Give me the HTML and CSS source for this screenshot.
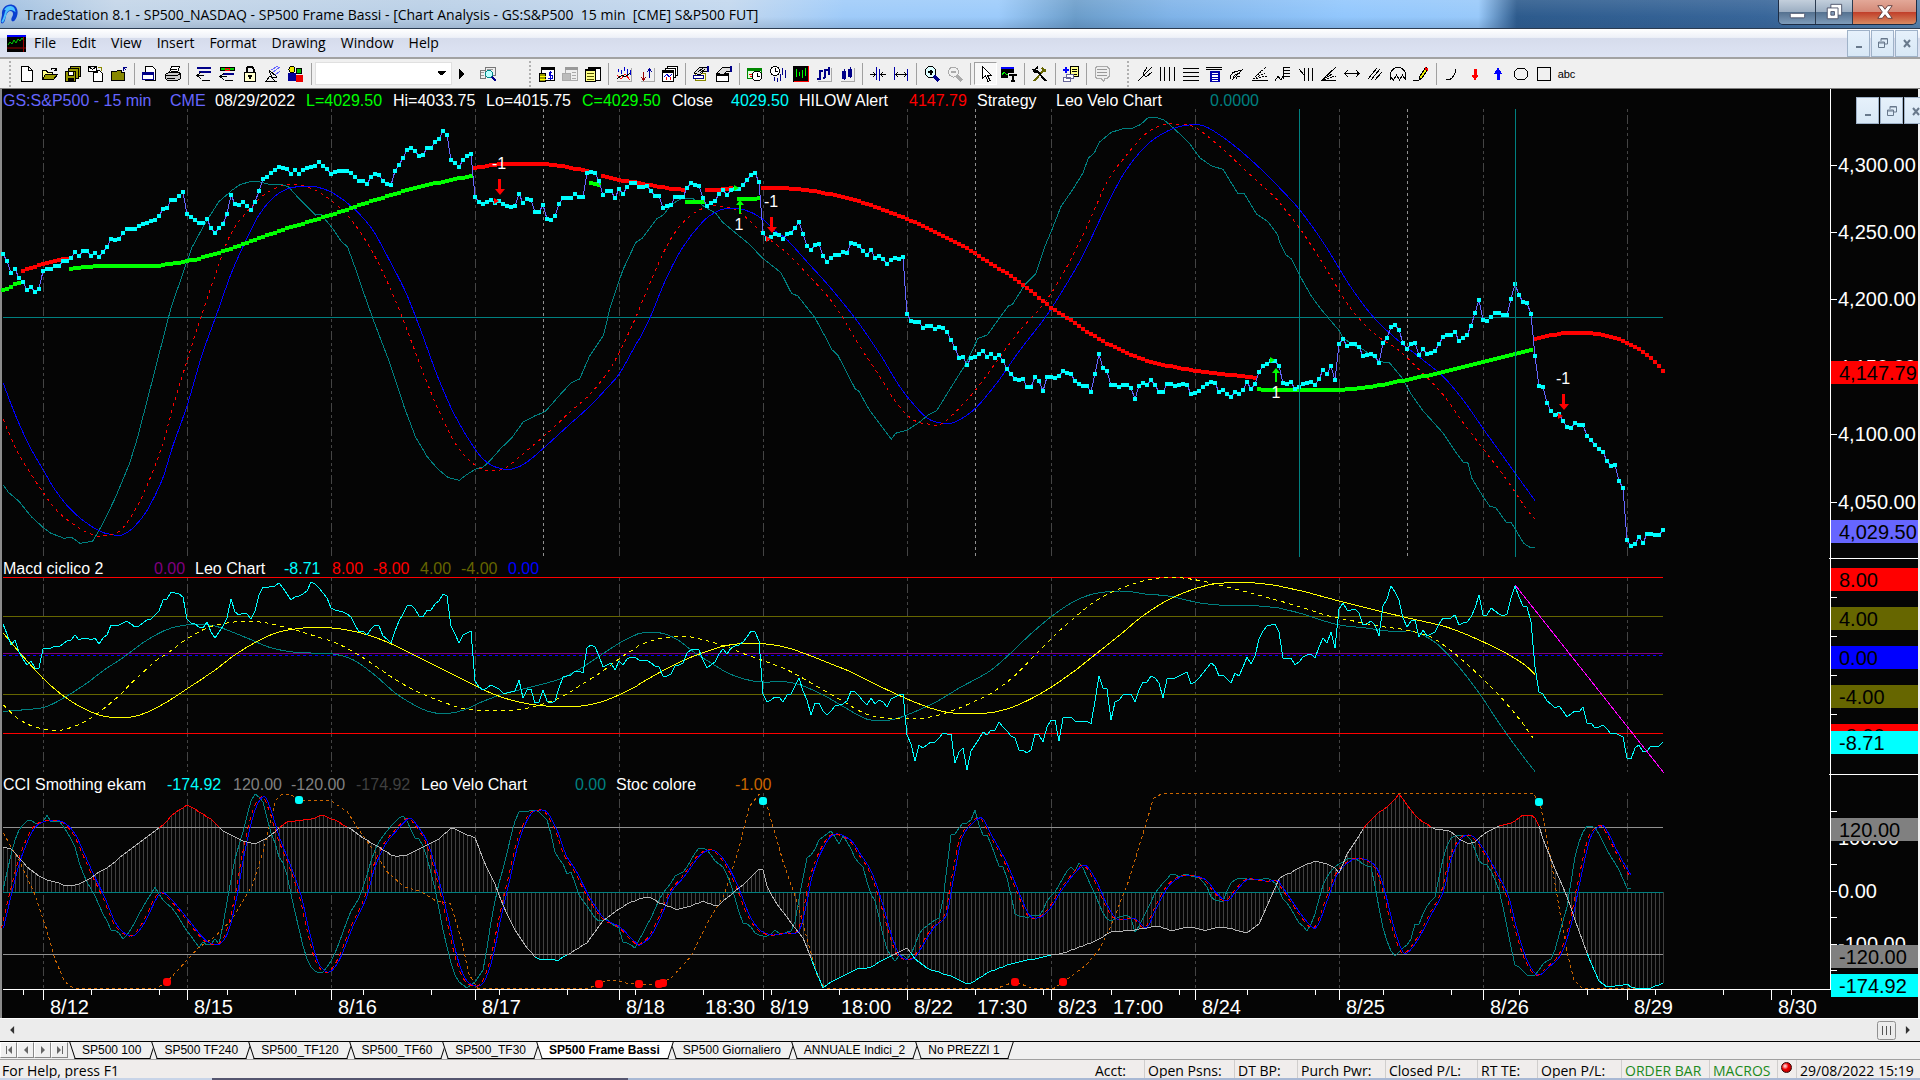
FILE: index.html
```html
<!DOCTYPE html>
<html lang="en">
<head>
<meta charset="utf-8">
<title>TradeStation 8.1</title>
<link rel="stylesheet" href="styles.css">
</head>
<body>
<header class="titlebar">
  <svg class="logo" viewBox="0 0 20 24"><path d="M2 13C1 4 10 0 15 4c4 4 3 10 0 14-2 3-5 1-3-3 2-3 1-6-2-6-4 1-4 6-5 9-1 4-5 5-4 0z" fill="#0b3fd0"/><path d="M5 8c3-4 8-4 9 0-3-2-6-1-8 2-1 4-2 8-4 10" fill="none" stroke="#4cc3ff" stroke-width="2"/></svg>
  <h1>TradeStation 8.1 - SP500_NASDAQ - SP500 Frame Bassi - [Chart Analysis - GS:S&amp;P500&nbsp; 15 min&nbsp; [CME] S&amp;P500 FUT]</h1>
  <div class="winbtns">
    <button aria-label="Minimize"><svg viewBox="0 0 20 20"><rect x="2.500" y="11.500" width="16" height="5" rx="1" fill="#fff" stroke="#4a4f66"/></svg></button>
    <button aria-label="Restore"><svg viewBox="0 0 20 20"><path d="M6.500 1.500h12v12h-12z" fill="#fff" stroke="#4a4f66"/><path d="M2.500 5.500h12v12h-12z" fill="#fff" stroke="#4a4f66"/><path d="M6.500 9.500h4v4h-4z" fill="#7f9ab8" stroke="#4a4f66"/></svg></button>
    <button class="close" aria-label="Close"><svg viewBox="0 0 20 20"><path d="M2 3h5l3 4 3-4h5l-5 7 5 7h-5l-3-4-3 4H2l5-7z" fill="#fff" stroke="#5b3a3a"/></svg></button>
  </div>
</header>
<nav class="menubar">
  <svg class="doc" viewBox="0 0 19 17"><path d="M0 0h19v17H0z" fill="#000"/><path d="M0 0h19v2H0z" fill="#00f"/><path d="M1 10l2-3 2 2 2-4 2 3 2-4 2 2 2-3 2 3" fill="none" stroke="#0c0"/><path d="M0 13h19M16.500 2v15" stroke="#900"/></svg>
  <a href="#">File</a><a href="#">Edit</a><a href="#">View</a><a href="#">Insert</a><a href="#">Format</a><a href="#">Drawing</a><a href="#">Window</a><a href="#">Help</a>
  <div class="mdi">
    <button aria-label="Minimize child"><svg viewBox="0 0 14 14"><path d="M4 10h6v2H4z" fill="#68798c"/></svg></button>
    <button aria-label="Restore child"><svg viewBox="0 0 14 14"><path d="M5 5V2.500h6.500V8H9M5 3h6M2.500 6h6v5.500h-6zM2 7h7" fill="none" stroke="#68798c"/></svg></button>
    <button aria-label="Close child"><svg viewBox="0 0 14 14"><path d="M4 4l6 7M10 4l-6 7" stroke="#68798c" stroke-width="2"/></svg></button>
  </div>
</nav>
<div class="toolbar" role="toolbar">
  <i class="grip"></i>
  <button aria-label="New"><svg viewBox="0 0 16 16"><path d="M2.500.500h7l4 4v11h-11zM9.500.500v4h4" fill="#fff"/></svg></button>
  <button aria-label="Open"><svg viewBox="0 0 16 16"><path d="M.500 13.500v-9h4l1 2h5v2" fill="#ff8"/><path d="M.500 13.500l3-5h12l-4 5z" fill="#990"/><path d="M9 3.500q3-3 5 0M12 4.500h2.500V2"/></svg></button>
  <button aria-label="Save all"><svg viewBox="0 0 16 16"><path d="M5.500.500h10v10h-10z" fill="#990"/><path d="M3.500 2.500h10v10h-10z" fill="#990"/><path d="M.500 5.500h10v10H.500z" fill="#990"/><path d="M3 5.500h5v4H3z" fill="#fff"/><path d="M3 12h5v4H3z" fill="#000"/></svg></button>
  <button aria-label="Import"><svg viewBox="0 0 16 16"><path d="M.500.500h8v5h-8zM.500.500l4 3 4-3" fill="#fff"/><path d="M5.500 6.500h4V4.500h2l3 3v8h-9z" fill="#fff"/><path d="M10 1.500h3v3" stroke="#880"/></svg></button>
  <button aria-label="Close folder"><svg viewBox="0 0 16 16"><path d="M.500 14.500v-9h5l1-1h4v2h3v8z" fill="#880"/><path d="M12 1l3 3M12 5V1h4" stroke="#008"/></svg></button>
  <i class="sep"></i>
  <button aria-label="Preview"><svg viewBox="0 0 16 16"><path d="M3.500.500h7l3 3v11h-10z" fill="#fff"/><path d="M.500 6.500h11v7H.500z" fill="#fff" stroke="#008"/><path d="M0 7.500h12" stroke="#008" stroke-width="3"/></svg></button>
  <button aria-label="Print"><svg viewBox="0 0 16 16"><path d="M4.500 6.500l2-6h8l-2 6z" fill="#fff"/><path d="M.500 8.500l3-2h11l1 2v4l-3 2h-10l-2-2z" fill="#ccc"/><path d="M.500 9.500h12l3-2M2 12h8M6 3h6M6 5h6"/></svg></button>
  <i class="sep"></i>
  <button aria-label="Insert analysis"><svg viewBox="0 0 16 16"><path d="M1 1.500h14M3 5.500h12" stroke="#008" stroke-width="2"/><path d="M1 9.500h7M5 6L1 9.500 5 13M6 14.500h8"/></svg></button>
  <button aria-label="Insert strategy"><svg viewBox="0 0 16 16"><path d="M1 1.500h14v3H1z" fill="#0c0"/><path d="M6 2h4v2H6z" stroke="red"/><path d="M4 7.500h11" stroke="#008" stroke-width="2"/><path d="M1 10.500h7M5 7l-4 3.500 4 3.500M6 14.500h8"/></svg></button>
  <button aria-label="Lock"><svg viewBox="0 0 16 16"><path d="M4.500 7V3l2-2.500h3l2 2.500v4" stroke-width="2"/><path d="M2.500 6.500h11v9h-11z" fill="#ffc"/><path d="M6 9.500h4M8 9v4" stroke-width="2"/></svg></button>
  <button aria-label="Satellite"><svg viewBox="0 0 16 16"><path d="M4 4l8 7-5 1zM1 15l4-5 5 5M0 15.500h12"/><path d="M6 4l7-4M8 6l7-5M10 9l5-4" stroke="#66f"/></svg></button>
  <button aria-label="Community"><svg viewBox="0 0 16 16"><circle cx="4" cy="3.500" r="3" fill="#ee0"/><circle cx="11" cy="5" r="3" fill="#0b0"/><path d="M.500 7.500h7v7h-7z" fill="#009" stroke="#009"/><path d="M8.500 9.500h6v6h-6z" fill="#e00" stroke="#e00"/></svg></button>
  <i class="sep"></i>
  <select aria-label="Symbol" class="combo"><option></option></select>
  <button class="narrow" aria-label="Go"><svg viewBox="0 0 16 16"><path d="M6 3l5 5-5 5z" fill="#000" stroke="none"/></svg></button>
  <button class="wide" aria-label="Lookup"><svg viewBox="0 0 16 16"><path d="M0 4h5v8H0zM5 1h10v8H5z" fill="#eee" stroke="#777"/><path d="M1 6h3M1 9h3M7 3h6" stroke="#999"/><circle cx="9" cy="8" r="3.500" fill="#bff" stroke="#088"/><path d="M12 11l4 4" stroke="#008" stroke-width="2"/></svg></button>
  <i class="grip"></i>
  <button aria-label="Account"><svg viewBox="0 0 16 16"><path d="M2.500 1.500h13v13h-13z" fill="#fff"/><path d="M2 2.500h14" stroke-width="3"/><path d="M.500 7.500h6v8h-6z" fill="#990"/><path d="M.500 10h6M.500 13h6" stroke="#ff0"/><path d="M13 6h-3v3h3v3H9M11.500 5v9" stroke="#00c"/></svg></button>
  <button aria-label="Orders"><svg viewBox="0 0 16 16"><path d="M3.500 1.500h12v13h-12z" fill="#eee" stroke="#aaa"/><path d="M3 2.500h13" stroke="#999" stroke-width="3"/><path d="M.500 7h8v7h-8zM10 6h4M10 9h4M10 12h4" stroke="#aaa" fill="#bbb"/></svg></button>
  <button aria-label="Matrix"><svg viewBox="0 0 16 16"><path d="M3.500 1.500h12v13h-12z" fill="#fff"/><path d="M.500 3.500h10v12H.500z" fill="#ff8"/><path d="M0 4h11M3 1.500h13" stroke-width="2"/><path d="M2 7.500h7M2 10.500h7M2 13.500h7" stroke="#550"/></svg></button>
  <i class="sep"></i>
  <button aria-label="Indicators"><svg viewBox="0 0 16 16"><path d="M1 15.500h14V2" stroke="#aaa"/><path d="M2 6V3M5 8V4M8 5V1M11 8V3M14 9V4" stroke="#00c"/><path d="M1 9l4 4 4-5 5 6" stroke="red"/><path d="M1 13l5-4 3 2 5-4"/></svg></button>
  <button aria-label="Strategies"><svg viewBox="0 0 16 16"><path d="M2 15.500h13V2" stroke="#aaa"/><path d="M4.500 6v8M2 11l2.500 3L7 11" stroke="#900"/><path d="M10.500 12V3M8 6l2.500-3L13 6" stroke="#009"/></svg></button>
  <button aria-label="Copy charts"><svg viewBox="0 0 16 16"><path d="M5.500.500h10v9h-10z" fill="#fff"/><path d="M3.500 2.500h10v9h-10z" fill="#fff"/><path d="M.500 4.500h11v11H.500z" fill="#fff"/><path d="M1 5.500h10" stroke-width="2"/><path d="M2 11l3-3 2 3 3-3" stroke="#00c"/><path d="M4 14v-3M8 14v-3" stroke="red"/></svg></button>
  <i class="sep"></i>
  <button aria-label="Format symbol"><svg viewBox="0 0 16 16"><path d="M2.500 7.500h10v7h-10z" fill="#ffc" stroke="#880"/><path d="M.500 9.500h10v3H.500z" fill="#fff" stroke="#008"/><path d="M1 7l6-6h7v4l-4 1-3 3z" fill="#ddd"/><path d="M5 6l5-4M7 7l5-4"/><path d="M15 0v6" stroke="#008" stroke-width="2"/></svg></button>
  <button aria-label="Format window"><svg viewBox="0 0 16 16"><path d="M.500 7.500h12v8H.500z" fill="#fff"/><path d="M1 9h12" stroke-width="2"/><path d="M1 7l6-6h7v4l-4 1-3 3z" fill="#ddd"/><path d="M15 0v6" stroke="#008" stroke-width="2"/></svg></button>
  <i class="sep"></i>
  <button aria-label="Calendar"><svg viewBox="0 0 16 16"><path d="M.500 2.500h14v10H.500z" fill="#dfd" stroke="#080"/><path d="M1 3h14" stroke="#080" stroke-width="3"/><path d="M2 8h3M3 10l2 1" stroke="red"/><circle cx="10" cy="10" r="5" fill="#fff"/><path d="M10 7v3h3"/></svg></button>
  <button aria-label="Interval"><svg viewBox="0 0 16 16"><circle cx="5" cy="5" r="4.500" fill="#fff"/><path d="M5 2v3h3"/><path d="M4 11v4M7 12v4M10 8v7M12 2v7M15 4v8" stroke="#008"/></svg></button>
  <button aria-label="Chart colours"><svg viewBox="0 0 16 16"><path d="M0 0h16v16H0z" fill="#000" stroke="none"/><path d="M.500 15.500h15V0" stroke="red" stroke-width="2"/><path d="M3 3v8M6 6v4M9 4v8M12 2v8" stroke="#0f0"/></svg></button>
  <button aria-label="Bars"><svg viewBox="0 0 16 16"><path d="M2 15.500h13V2" stroke="#aaa"/><path d="M4 4v10M1 13h3M4 5h3M9 3v9M7 12h2M9 4h3M13 1v8" stroke="#008" stroke-width="2"/></svg></button>
  <button aria-label="Candles"><svg viewBox="0 0 16 16"><path d="M2 15.500h13V2" stroke="#aaa"/><path d="M5 3v11M11 1v11" stroke="#008"/><path d="M4 5.500h2v6H4zM10 3.500h2v6h-2z" fill="#fff" stroke="#008" stroke-width="2"/></svg></button>
  <i class="sep"></i>
  <button aria-label="Decrease spacing"><svg viewBox="0 0 16 16"><path d="M6.500 1v13M9.500 3v12" stroke="#00a"/><path d="M0 8.500h5M3 6l2 2.500L3 11M16 8.500h-5M13 6l-2 2.500 2 2.500"/></svg></button>
  <button aria-label="Increase spacing"><svg viewBox="0 0 16 16"><path d="M1.500 1v13M14.500 3v12" stroke="#00a"/><path d="M3 8.500h10M5 6L3 8.500 5 11M11 6l2 2.500-2 2.500"/></svg></button>
  <i class="sep"></i>
  <button aria-label="Zoom in"><svg viewBox="0 0 16 16"><circle cx="6.500" cy="6" r="5.500" fill="#dff"/><path d="M4 6h5M6.500 3.500v5" stroke-width="2"/><path d="M10 10l5 5" stroke="#008" stroke-width="3"/></svg></button>
  <button aria-label="Zoom out"><svg viewBox="0 0 16 16"><g stroke="#aaa"><circle cx="6.500" cy="6" r="5"/><path d="M4 6h5" stroke-width="2"/><path d="M10 10l5 5" stroke-width="3"/></g></svg></button>
  <i class="sep"></i>
  <button class="pressed" aria-label="Pointer"><svg viewBox="0 0 16 16"><path d="M4.500.500v12l3-3 2.500 6 2-1-2.500-5h4z" fill="#fff"/></svg></button>
  <button aria-label="Chart text"><svg viewBox="0 0 16 16"><path d="M0 1h13v11H0z" fill="#000" stroke="none"/><path d="M0 1.500h13" stroke="#00f" stroke-width="2"/><path d="M1 9l2-3 3 3 3-2" stroke="#0f0"/><path d="M7 7h9v9H7z" fill="#eee" stroke="none"/><path d="M8 9h8M12 9v7M10 15h4" stroke-width="2"/></svg></button>
  <i class="sep"></i>
  <button aria-label="Tools"><svg viewBox="0 0 16 16"><path d="M2 15L13 3M10 2l4 4" stroke="#660" stroke-width="2"/><path d="M14 15L4 4M1 5l5-4M1 3l3 4" stroke-width="2"/></svg></button>
  <i class="sep"></i>
  <button aria-label="Add order"><svg viewBox="0 0 16 16"><path d="M7.500.500h8v10h-8z" fill="#ff8"/><path d="M9 3h5M9 5.500h5M9 8h5"/><path d="M3.500 8.500h7v4h-7zM.500 11.500h7v4h-7z" fill="#fff" stroke="#669"/><path d="M0 3.500h6M3 .500v6" stroke="#00f" stroke-width="2"/></svg></button>
  <i class="sep"></i>
  <button aria-label="Comment"><svg viewBox="0 0 16 16"><path d="M3 .500h10l2 2v8l-2 2h-2l-1 3-3-3H3l-2-2v-8z" fill="#eee" stroke="#aaa"/><path d="M3 3.500h10M3 6.500h10M3 9.500h10" stroke="#999"/></svg></button>
  <span class="space"></span>
  <i class="grip"></i>
  <button aria-label="Pitchfork"><svg viewBox="0 0 16 16"><path d="M1 15L10 6M6 8l4-7M10 6l5-5M9 11l6-5M6 8l3 3"/></svg></button>
  <button aria-label="Vertical lines"><svg viewBox="0 0 16 16"><path d="M.500 1v14M4.500 1v14M9.500 1v14M14.500 1v14"/></svg></button>
  <button aria-label="Horizontal lines"><svg viewBox="0 0 16 16"><path d="M0 2.500h16M0 6.500h16M0 10.500h16M0 14.500h16"/></svg></button>
  <button aria-label="Calculator"><svg viewBox="0 0 16 16"><path d="M0 1.500h16M0 3.500h16"/><path d="M4.500 5.500h8v10h-8z" fill="#fff" stroke="#00a" stroke-width="2"/><path d="M4 8h8M6 11h6M6 13h6" stroke="#00a"/></svg></button>
  <button aria-label="Arcs"><svg viewBox="0 0 16 16"><path d="M1 13Q2 4 12 5M4 13q1-6 7-5M7 13q0-3 4-2M3 14L14 3"/></svg></button>
  <button aria-label="Fan"><svg viewBox="0 0 16 16"><path d="M0 14.500h16"/><path d="M1 13L14 1M1 13L15 6M1 13l14-3" stroke-dasharray="2 1"/></svg></button>
  <button aria-label="Retracement"><svg viewBox="0 0 16 16"><path d="M0 15l3-5 3 4 2-4M8.500 13V1M9 1.500h6M9 4.500h6M9 7.500h6M9 10.500h6"/></svg></button>
  <button aria-label="Time lines"><svg viewBox="0 0 16 16"><path d="M1 3l5 6v6M6.500 2v13M10.500 2v13M14.500 2v13"/></svg></button>
  <button aria-label="Speed lines"><svg viewBox="0 0 16 16"><path d="M1 14L15 1M0 14.500h15M1 14L11 8"/><path d="M3 14l12-4M8 9l6 2" stroke-dasharray="2 1"/></svg></button>
  <button aria-label="Extend"><svg viewBox="0 0 16 16"><path d="M1 7.500h14M4 4L1 7.500 4 11M12 4l3 3.500-3 3.500"/></svg></button>
  <button aria-label="Parallel lines"><svg viewBox="0 0 16 16"><path d="M1 13L10 2M4 14L13 3M8 14l7-8"/></svg></button>
  <button aria-label="Cycles"><svg viewBox="0 0 16 16"><path d="M.500 14V7Q3 1.500 8 1.500T15.500 7v7M.500 11l3 3 3-5 3 5 3-5 3 5"/></svg></button>
  <button aria-label="Pencil"><svg viewBox="0 0 16 16"><path d="M0 14.500h6M6 14l1-4L13 1l2 2-6 9z" fill="#ee0"/><path d="M12 2l3 2" stroke="red" stroke-width="2"/></svg></button>
  <i class="sep"></i>
  <button aria-label="Arc"><svg viewBox="0 0 16 16"><path d="M2 13.500h4Q11 10 12 3"/></svg></button>
  <button aria-label="Down arrow"><svg viewBox="0 0 16 16"><path d="M7 3h2v6h2l-3 5-3-5h2z" fill="red" stroke="red"/></svg></button>
  <button aria-label="Up arrow"><svg viewBox="0 0 16 16"><path d="M7 13h2V7h2L8 2 5 7h2z" fill="#00f" stroke="#00f"/></svg></button>
  <button aria-label="Ellipse"><svg viewBox="0 0 16 16"><ellipse cx="8" cy="8" rx="7" ry="6"/></svg></button>
  <button aria-label="Rectangle"><svg viewBox="0 0 16 16"><path d="M1.500 1.500h13v13h-13z"/></svg></button>
  <button class="abc">abc</button>
</div>
<main class="chartwin">
  <svg id="chart" class="chart" viewBox="0 89 1920 929" role="img" aria-label="Price chart"></svg>
  <div class="mdi floating">
    <button aria-label="Minimize chart"><svg viewBox="0 0 14 14"><path d="M4 10h6v2H4z" fill="#68798c"/></svg></button>
    <button aria-label="Restore chart"><svg viewBox="0 0 14 14"><path d="M5 5V2.500h6.500V8H9M5 3h6M2.500 6h6v5.500h-6zM2 7h7" fill="none" stroke="#68798c"/></svg></button>
    <button aria-label="Close chart"><svg viewBox="0 0 14 14"><path d="M4 4l6 7M10 4l-6 7" stroke="#68798c" stroke-width="2"/></svg></button>
  </div>
</main>
<div class="scroll">
  <button aria-label="Scroll left"><svg viewBox="0 0 8 10"><path d="M6 0v10L1 5z" fill="#333"/></svg></button>
  <span class="space"></span>
  <svg class="thumb" viewBox="0 0 19 19"><rect x=".500" y=".500" width="18" height="18" rx="2" fill="#ececec" stroke="#909090"/><path d="M5.500 5v9M9.500 5v9M13.500 5v9" stroke="#555"/></svg>
  <button aria-label="Scroll right"><svg viewBox="0 0 8 10"><path d="M2 0v10l5-5z" fill="#333"/></svg></button>
</div>
<div class="tabs">
  <div class="pager">
    <button aria-label="First"><svg viewBox="0 0 10 10"><path d="M8 1v8L4 5zM2 1h1v8H2z" fill="#666"/></svg></button>
    <button aria-label="Previous"><svg viewBox="0 0 10 10"><path d="M7 1v8L3 5z" fill="#666"/></svg></button>
    <button aria-label="Next"><svg viewBox="0 0 10 10"><path d="M3 1v8l4-4z" fill="#666"/></svg></button>
    <button aria-label="Last"><svg viewBox="0 0 10 10"><path d="M2 1v8l4-4zM7 1h1v8H7z" fill="#666"/></svg></button>
  </div>
  <a class="tab" href="#">SP500 100</a><a class="tab" href="#">SP500 TF240</a><a class="tab" href="#">SP500_TF120</a><a class="tab" href="#">SP500_TF60</a><a class="tab" href="#">SP500_TF30</a><a class="tab active" href="#">SP500 Frame Bassi</a><a class="tab" href="#">SP500 Giornaliero</a><a class="tab" href="#">ANNUALE Indici_2</a><a class="tab" href="#">No PREZZI 1</a>
</div>
<footer class="status">
  <span class="help">For Help, press F1</span>
  <span class="cell w52">Acct:</span><span class="cell w90">Open Psns:</span><span class="cell w63">DT BP:</span><span class="cell w88">Purch Pwr:</span><span class="cell w92">Closed P/L:</span><span class="cell w60">RT TE:</span><span class="cell w84">Open P/L:</span><span class="cell w88 green">ORDER BAR</span><span class="cell w68 green">MACROS</span><span class="cell w19"><i class="led"></i></span><span class="cell w124">29/08/2022 15:19</span>
</footer>
<div class="taskbar"></div>
<script src="chart.js"></script>
</body>
</html>
```
FILE: styles.css
```css
* { box-sizing: border-box; }
body {
  margin: 0;
  min-height: 100vh;
  display: flex;
  flex-direction: column;
  overflow-x: hidden;
  background: #f0f0f0;
  color: #000;
  font: 14px/18px "Open Sans", "Noto Sans", sans-serif;
}
button { border: 0; padding: 0; background: none; font: inherit; color: inherit; }
a { color: inherit; text-decoration: none; }
svg { display: block; flex: none; }
.space { flex: 1; }

.titlebar {
  display: flex;
  height: 29px;
  border-bottom: 1px solid #2b3b50;
  background:
    linear-gradient(rgba(255,255,255,.1), rgba(255,255,255,0) 60%, rgba(40,70,110,.18)),
    linear-gradient(90deg, #9fbfe0 0, #c3d5e8 6%, #b9cfe6 22%, #c2d7ee 38%, #9fcbf9 44%, #9ccbfb 52%, #6b9dca 56%, #7fb3e8 61%, #92c7fd 70%, #98c9fa 77%, #2d5b8d 79%, #38669a 92%, #5b86ae 100%);
}
.logo { width: 20px; height: 24px; margin: 2px 5px 0 0; }
.titlebar h1 { flex: 1; margin: 0; font-size: 14px; font-weight: 400; line-height: 29px; white-space: nowrap; }
.winbtns {
  display: flex;
  height: 25px;
  margin-right: 3px;
  border: 1px solid #1d2c44;
  border-top: 0;
  border-radius: 0 0 5px 5px;
  overflow: hidden;
}
.winbtns button {
  width: 37px;
  display: flex;
  align-items: center;
  justify-content: center;
  border-right: 1px solid #2b3b50;
  background: linear-gradient(#c3cfdc, #9dafc3 48%, #54708f 50%, #7f9cba);
}
.winbtns .close { width: 63px; border: 0; background: linear-gradient(#e3a898, #d48a78 48%, #c03d28 50%, #d98a60); }
.winbtns svg { width: 20px; height: 18px; }

.menubar {
  display: flex;
  align-items: center;
  height: 30px;
  border-bottom: 2px solid #a2a2a2;
  background: linear-gradient(#fff, #eef1f8 30%, #d6dcec 34%, #dde3f3 95%);
}
.doc { width: 19px; height: 17px; margin: 0 8px 0 7px; }
.menubar a { margin-right: 15px; line-height: 28px; }
.mdi { display: flex; gap: 1px; }
.menubar .mdi { margin-left: auto; margin-right: 2px; }
.mdi button {
  width: 23px;
  height: 27px;
  display: flex;
  align-items: center;
  justify-content: center;
  border: 1px solid #9fb2c8;
  background: linear-gradient(#e6f1fb, #d8e8f6);
}
.mdi svg { width: 14px; height: 14px; }

.toolbar {
  display: flex;
  align-items: center;
  height: 30px;
  padding-left: 7px;
  border-bottom: 1px solid #808080;
}
.toolbar button { flex: none; width: 23px; height: 23px; display: flex; align-items: center; justify-content: center; }
.toolbar svg { width: 16px; height: 16px; fill: none; stroke: #000; shape-rendering: crispEdges; }
.toolbar .narrow { width: 17px; }
.toolbar .wide { width: 38px; }
.toolbar .pressed { border: 1px solid #a0a0a0; border-right-color: #fff; border-bottom-color: #fff; background: #f8f8f8; }
.toolbar .abc { font: 11px/16px "Liberation Sans", Arial, sans-serif; }
.grip { flex: none; width: 2px; height: 26px; margin: 0 4px 0 2px; background: repeating-linear-gradient(#b0b0b0 0 2px, transparent 2px 4px); }
.toolbar .wide + .grip { margin-left: 22px; }
.toolbar .space { flex: none; width: 12px; }
.sep { flex: none; width: 8px; height: 22px; background: linear-gradient(#a0a0a0, #a0a0a0) 4px 0 / 1px 100% no-repeat; }
.combo {
  appearance: none;
  flex: none;
  width: 137px;
  height: 23px;
  border: 1px solid #e0e0e0;
  background-color: #fff;
  background-image: linear-gradient(45deg, transparent 50%, #000 50%), linear-gradient(-45deg, transparent 50%, #000 50%);
  background-image: linear-gradient(to top right, transparent 50%, #000 50%), linear-gradient(to top left, transparent 50%, #000 50%);
  background-repeat: no-repeat;
  background-size: 5px 5px;
  background-position: right 9px top 8px, right 4px top 8px;
}

.chartwin { position: relative; overflow: hidden; background: #050505; }
.chart { width: 100%; height: auto; font-family: "Liberation Sans", Arial, sans-serif; }
.chart .line { fill: none; stroke-width: 1; shape-rendering: crispEdges; }
.chart .small { font-size: 16px; }
.chart .big { font-size: 20px; }
.floating { position: absolute; top: 8px; right: -7px; }

.scroll {
  display: flex;
  align-items: center;
  height: 23px;
  padding: 0 9px;
  border-top: 1px solid #fff;
  background: #ececec;
}
.scroll button svg { width: 7px; height: 8px; }
.scroll .thumb { width: 19px; height: 19px; margin-right: 8px; }

.tabs {
  display: flex;
  height: 18px;
  border-top: 1px solid #000;
  font: 12px/16px "Liberation Sans", Arial, sans-serif;
}
.pager { display: flex; margin-right: 3px; }
.pager button { width: 17px; height: 16px; display: flex; align-items: center; justify-content: center; border: 1px solid; border-color: #fff #888 #888 #fff; }
.pager svg { width: 10px; height: 10px; }
.tab {
  position: relative;
  z-index: 0;
  padding: 0 11px;
  margin-right: 1px;
  white-space: nowrap;
}
.tab::before, .tab::after {
  content: "";
  position: absolute;
  z-index: -1;
  top: 0;
  height: 16px;
  width: 60%;
  border-bottom: 1px solid #000;
  background: #f0f0f0;
}
.tab::before { left: 1px; border-left: 1px solid #000; transform: skewX(18deg); }
.tab::after { right: 0; border-right: 1px solid #000; transform: skewX(-18deg); }
.tab.active { font-weight: 700; z-index: 1; }
.tab.active::before, .tab.active::after { background: #fff; }

.status {
  display: flex;
  height: 19px;
  padding-left: 2px;
  border-top: 1px solid #a0a0a0;
  background: #f0edec;
}
.help { flex: 1; white-space: nowrap; line-height: 22px; }
.cell { flex: none; padding-left: 3px; line-height: 22px; white-space: nowrap; }
.cell + .cell { border-left: 1px solid #d0cecd; }
.w19 { width: 19px; }
.w52 { width: 52px; }
.w60 { width: 60px; }
.w63 { width: 63px; }
.w68 { width: 68px; }
.w84 { width: 84px; }
.w88 { width: 88px; }
.w90 { width: 90px; }
.w92 { width: 92px; }
.w124 { width: 124px; }
.green { color: #1c8a1c; }
.led { display: block; width: 11px; height: 11px; margin-top: 2px; border: 1px solid #300; border-radius: 6px; background: radial-gradient(circle at 35% 35%, #fbb 10%, #e00 40%, #900); }
.taskbar { height: 2px; background: linear-gradient(90deg, #c8d4e8 0 212px, #55556f 212px 628px, #a8b8d4 628px); }
```
FILE: chart.js
```js
const svg = document.getElementById('chart');
const out = [];

/* Samples come in three blocks, each with its own origin and horizontal scale. */
const blocks = [[0, 2.3758], [640, 2.3758], [1280, 2.45]];
function series(top, ...parts) {
  const pts = [];
  parts.forEach((text, b) => {
    text.trim().split(/\s+/).filter(Boolean).forEach(pair => {
      const [x, y] = pair.split(',').map(Number);
      pts.push([blocks[b][0] + x / blocks[b][1], top + y / 3]);
    });
  });
  return pts.sort((a, b) => a[0] - b[0]);
}
const single = (top, b, text) => series(top, ...[0, 1, 2].map(i => i === b ? text : ''));
function at(pts, x) {
  if (x <= pts[0][0]) return pts[0][1];
  for (let i = 1; i < pts.length; i++) {
    if (x <= pts[i][0]) {
      const [x0, y0] = pts[i - 1], [x1, y1] = pts[i];
      return y0 + (y1 - y0) * (x - x0) / (x1 - x0 || 1);
    }
  }
  return pts[pts.length - 1][1];
}
function bars(pts) {
  const r = [], a = pts[0][0] - 2, z = pts[pts.length - 1][0] + 2;
  for (let x = 3; x <= 1664; x += 4) if (x >= a && x <= z) r.push([x, Math.round(at(pts, x))]);
  return r;
}
const path = pts => 'M' + pts.map(p => `${p[0].toFixed(1)} ${p[1].toFixed(1)}`).join('L');
function smooth(pts) {
  let d = `M${pts[0][0].toFixed(1)} ${pts[0][1].toFixed(1)}`;
  for (let i = 0; i < pts.length - 1; i++) {
    const a = pts[i - 1] || pts[i], b = pts[i], c = pts[i + 1], e = pts[i + 2] || c;
    d += `C${(b[0] + (c[0] - a[0]) / 6).toFixed(1)} ${(b[1] + (c[1] - a[1]) / 6).toFixed(1)} ${(c[0] - (e[0] - b[0]) / 6).toFixed(1)} ${(c[1] - (e[1] - b[1]) / 6).toFixed(1)} ${c[0].toFixed(1)} ${c[1].toFixed(1)}`;
  }
  return d;
}
const line = (d, color, dash = '') => out.push(`<path class="line" d="${d}" stroke="${color}"${dash && ` stroke-dasharray="${dash}"`}/>`);
const vline = (x, a, b, color, dash) => line(`M${x + .5} ${a}V${b}`, color, dash);
const hline = (y, color, dash, a = 3, b = 1663) => line(`M${a} ${y + .5}H${b}`, color, dash);
const rect = (x, y, w, h, color) => out.push(`<rect x="${x}" y="${y}" width="${w}" height="${h}" fill="${color}"/>`);
const text = (x, y, s, color = '#fff', size = 'small', anchor = 'start') => out.push(`<text class="${size}" x="${x}" y="${y}" fill="${color}" text-anchor="${anchor}">${s}</text>`);
const dots = (pts, color) => out.push(`<path fill="${color}" d="${bars(pts).map(p => `M${p[0] - 2} ${p[1] - 2}h4v4h-4z`).join('')}"/>`);

const cyan = '#00ffff', red = '#ff0000', green = '#00ff00', teal = '#008080', blue = '#0000ff', violet = '#6666ff', olive = '#666600', gray = '#808080';

/* Frame and grid */
rect(0, 89, 1920, 929, '#050505');
rect(0, 89, 2, 929, '#8c8c8c');
rect(1918, 89, 2, 929, '#f0f0f0');
for (let x = 43; x < 1700; x += 144) {
  [[109, 556], [578, 772], [793, 990]].forEach(([a, b]) => vline(x, a, b, '#444', '3 3 9 3 3 3'));
}
[543, 975, 1407].forEach(x => vline(x, 109, 556, '#909090', '3 3'));
hline(317, teal);

/* Price cycle curves */
const cycTeal = series(90,
  '8,1185 20,1207 45,1234 75,1281 104,1314 120,1329 152,1345 170,1342 190,1360 220,1354 243,1304 275,1220 308,1120 325,1051 350,930 382,772 407,650 432,560 455,475 488,398 520,335 552,300 570,284 597,274 610,274 640,283 670,284 685,290 710,325 750,375 762,372 790,415 810,452 826,472 850,555 865,612 890,700 925,815 960,950 987,1040 1015,1100 1040,1137 1065,1163 1092,1171 1105,1157 1130,1137 1148,1131 1165,1111 1190,1075 1215,1045 1243,996 1270,978 1295,965 1330,915 1357,878 1377,867 1400,800 1434,735 1450,650 1480,540 1510,458',
  '5,445 25,412 40,386 55,375 75,343 100,324 125,325 150,347 180,370 195,395 230,432 260,463 290,503 335,548 360,610 375,618 415,682 440,740 455,778 470,795 490,845 512,898 520,904 545,960 575,1010 597,1048 607,1030 635,1020 660,1000 685,975 705,962 740,890 775,820 803,745 825,735 855,682 875,648 885,643 915,583 940,552 960,475 980,415 1000,350 1030,295 1052,250 1065,205 1080,187 1092,156 1120,127 1150,115 1170,115 1190,103 1208,82 1225,82 1245,90 1270,117 1305,160 1330,203 1358,228 1385,238 1420,310 1435,310 1465,372 1492,395 1515,435',
  '0,460 15,495 28,507 50,560 75,615 100,657 145,722 155,745 180,765 205,780 245,815 268,818 300,865 320,910 350,962 400,1030 430,1085 450,1118 460,1118 470,1165 500,1225 515,1250 528,1252 555,1298 567,1298 580,1325 597,1360 615,1374 624,1372');
const cycBlue = series(90,
  '8,880 25,938 45,1000 70,1068 104,1143 130,1198 160,1247 195,1289 235,1322 265,1334 292,1334 320,1309 350,1260 385,1170 410,1070 445,945 480,795 515,672 550,548 580,463 615,375 650,322 680,298 715,289 750,290 790,308 840,355 885,419 930,522 965,610 1000,722 1040,860 1080,975 1130,1080 1160,1120 1190,1136 1220,1136 1250,1118 1291,1075 1350,1007 1400,950 1440,897 1472,850 1510,765',
  '0,743 25,680 60,572 100,475 150,394 185,363 215,355 250,360 290,386 320,422 350,450 400,520 440,575 480,635 520,700 570,792 620,895 665,964 690,990 720,1000 750,995 797,955 850,875 900,785 960,687 1000,610 1050,502 1100,370 1150,250 1200,170 1240,132 1275,112 1310,104 1340,108 1380,137 1430,186 1490,255',
  '0,295 50,362 110,465 170,585 230,683 290,752 340,800 400,860 450,932 500,1020 550,1105 600,1190 625,1232');
const cycRed = series(90,
  '8,988 30,1055 55,1115 104,1210 140,1268 190,1316 225,1336 245,1338 285,1322 320,1262 350,1185 385,1068 410,955 440,830 475,690 510,560 545,440 580,375 620,322 655,294 690,284 730,291 775,320 830,383 880,475 920,575 955,680 1000,830 1040,955 1085,1067 1130,1127 1165,1142 1200,1134 1240,1094 1300,1030 1355,965 1400,915 1445,845 1472,785 1500,712',
  '0,652 30,560 70,453 110,388 150,355 185,348 225,358 250,380 300,440 350,490 400,556 450,625 485,690 520,765 570,860 610,940 650,990 690,1003 715,1002 750,965 797,900 850,810 900,725 960,640 1010,540 1060,415 1110,275 1150,205 1200,133 1240,106 1270,102 1310,107 1350,140 1400,195 1450,255 1505,318',
  '0,340 50,418 110,530 170,650 230,730 290,780 350,850 400,915 450,1000 500,1080 550,1160 600,1250 625,1288');
line(path(cycTeal), teal);
line(smooth(cycBlue), blue);
line(smooth(cycRed), red, '3 4');

/* Trend dots */
[[0, '8,600 17,597 27,589 36,583 46,577'],
 [0, '169,537 198,531 245,528 378,527 426,518 464,509 521,488 578,463 626,440 692,411 740,393 797,371 844,350 892,330 958,304 1015,286 1072,269 1120,258'],
 [0, '1405,279 1424,286'], [1, '112,336 150,336'], [1, '236,328 255,328 283,325'], [1, '1471,898 1500,900 1567,900'],
 [2, '0,900 146,900 194,895 253,884 312,869 371,854 429,837 488,818 547,800 596,786 616,780']
].forEach(([b, s]) => dots(single(90, b, s), green));
[[0, '55,542 75,534 103,521 131,512 160,506'], [0, '1129,233 1186,223 1243,221 1300,223 1348,231 1395,243'],
 [0, '1433,258 1471,270 1519,279'], [1, '3,281 46,290 74,296 103,299'], [1, '160,300 179,300 217,295'],
 [1, '293,293 340,294 397,300 445,311 492,323 540,342 587,364 635,387 682,413 730,443 778,476 825,514 873,551 920,594 958,633 977,654 1015,683 1063,726 1110,761 1158,790 1205,813 1243,825 1291,836 1338,846 1395,854 1433,858 1462,863'],
 [2, '626,747 655,738 694,730 763,729 802,738 841,752 880,778 910,804 939,843']
].forEach(([b, s]) => dots(single(90, b, s), red));

/* Price */
const price = series(90,
  '8,492 17,515 27,552 36,537 46,565 55,578 66,606 75,590 84,609 93,595 103,537 122,537 131,527 141,527 150,513 160,513 169,503 179,486 188,499 198,482 208,482 217,500 226,489 236,503 245,486 255,471 264,446 274,450 283,447 293,429 302,417 320,417 330,407 340,402 350,398 359,392 369,390 378,378 388,356 398,353 407,329 416,329 426,318 435,305 445,377 455,381 464,392 474,399 483,399 493,387 502,417 512,432 521,413 531,399 540,371 550,306 559,345 569,345 578,336 588,350 597,360 607,333 616,299 626,263 635,261 645,247 654,240 663,230 682,237 692,254 701,240 711,253 721,240 730,235 740,229 749,228 759,215 768,228 778,237 787,254 797,245 825,243 835,250 844,263 854,275 863,274 873,283 882,261 892,251 901,254 911,274 920,283 930,285 939,240 949,222 958,204 968,177 977,174 987,183 996,198 1006,195 1015,174 1025,174 1034,156 1044,147 1053,122 1063,135 1072,216 1082,220 1091,232 1101,208 1110,197 1120,191 1129,327 1139,337 1148,341 1158,335 1167,329 1177,340 1186,333 1196,343 1205,347 1215,351 1224,348 1234,309 1243,342 1253,326 1262,330 1272,369 1281,365 1291,342 1300,390 1310,390 1319,378 1329,338 1338,324 1357,324 1367,310 1376,320 1386,320 1395,247 1405,245 1414,248 1424,276 1433,316 1443,302 1452,303 1462,326 1471,296 1481,313 1490,291 1500,278 1510,279 1519,292',
  '8,292 17,288 27,304 36,318 46,318 55,354 65,349 74,345 84,320 103,322 112,292 122,278 131,284 141,288 150,326 160,351 169,338 179,332 188,311 198,300 207,315 217,300 226,296 236,296 245,285 255,269 264,254 274,250 283,278 293,442 302,448 312,440 321,431 331,436 340,447 350,431 359,430 369,413 378,396 388,435 397,470 407,480 416,466 426,461 435,498 445,516 454,505 464,495 473,495 483,486 492,490 502,457 512,462 521,470 531,484 540,495 549,479 559,507 568,497 578,509 587,521 597,510 606,504 616,506 626,500 635,686 644,694 663,697 673,714 682,708 692,708 701,716 711,710 721,713 730,728 739,749 749,776 758,803 768,800 778,829 787,801 797,801 806,790 815,782 825,801 834,791 844,806 853,795 863,815 872,836 882,852 892,870 911,868 920,894 930,891 939,860 949,876 958,906 967,860 987,863 996,857 1006,840 1015,848 1025,852 1034,874 1044,884 1053,889 1063,887 1072,906 1082,846 1091,789 1101,840 1110,843 1120,888 1129,885 1139,890 1148,885 1158,885 1167,893 1177,930 1186,885 1196,879 1205,886 1215,869 1224,886 1234,907 1243,906 1253,879 1262,882 1272,888 1281,884 1291,882 1300,884 1310,915 1319,909 1329,902 1338,892 1348,880 1357,875 1367,880 1376,907 1386,899 1395,912 1405,922 1414,905 1424,914 1433,898 1443,875 1452,898 1462,882 1471,843 1481,827 1490,822 1500,811 1509,813 1519,828',
  '8,884 17,882 27,877 38,900 48,889 57,882 67,880 76,876 86,886 96,866 106,839 116,852 125,827 135,870 146,747 155,746 165,771 175,762 185,762 194,772 204,800 214,793 224,792 234,800 243,821 253,754 262,746 272,710 282,705 292,722 302,762 312,779 321,762 331,759 341,796 351,777 361,793 371,789 380,783 390,762 400,738 419,734 429,726 439,753 449,742 458,735 468,707 478,669 488,627 498,695 507,693 517,680 527,668 537,669 547,677 557,675 566,627 576,580 586,617 596,638 606,638 616,676 626,816 635,891 645,890 655,944 665,966 675,977 684,971 694,993 704,1013 714,1014 723,998 733,1005 743,1004 753,1041 763,1050 772,1065 782,1077 792,1088 802,1115 812,1131 822,1125 831,1175 841,1196 851,1363 860,1367 870,1361 880,1340 890,1359 900,1328 910,1331 920,1337 929,1335 939,1320');
line(path(bars(price)), violet);
dots(price, cyan);
[1299, 1515].forEach(x => vline(x, 109, 557, teal));

/* Strategy markers */
const down = (x, y) => out.push(`<path fill="${red}" d="M${x - 1} ${y}h3v10h4l-5 6-5-6h3z"/>`);
const up = (x, y) => out.push(`<path fill="${green}" d="M${x} ${y}l4 5h-3v9h-2v-9h-3z"/>`);
const tri = (x, y, c) => out.push(`<path fill="${c}" d="M${x - 2} ${y - 3}l5 3-5 3z"/>`);
[[499, 169, 179], [771, 207, 217], [1563, 384, 394]].forEach(([x, ty, ay]) => {
  text(x, ty, '-1', '#fff', 'small', 'middle');
  down(x, ay);
  tri(x - 3, ay + 22, red);
});
tri(736, 188, green); up(740, 200); text(739, 230, '1', '#fff', 'small', 'middle');
tri(1272, 360, green); up(1276, 368); text(1276, 398, '1', '#fff', 'small', 'middle');

/* Macd panel */
hline(577, red); hline(616, olive); hline(653, '#800080'); hline(655, blue, '3 3'); hline(694, olive); hline(733, red);
const smoothSets = [
  [teal, '',
   '8,469 70,463 110,455 150,430 200,390 250,343 290,310 340,263 390,227 430,212 470,208 510,213 550,230 600,256 640,277 700,292 790,297 840,315 890,360 940,415 980,447 1020,470 1060,476 1100,466 1150,438 1200,415 1260,397 1330,372 1380,340 1430,298 1480,258 1510,240',
   '0,235 30,232 60,237 90,255 130,293 170,325 210,355 250,373 290,381 350,381 390,394 440,423 490,460 540,493 590,496 630,482 700,443 760,398 830,349 880,295 930,235 980,182 1030,140 1070,119 1120,109 1160,109 1200,117 1260,124 1330,144 1400,152 1460,152 1510,158',
   '0,160 50,175 100,195 150,211 210,219 280,230 320,228 350,240 390,272 440,338 490,418 540,510 590,595 625,650'],
  ['#ffff00', '4 4',
   '8,450 40,488 70,510 100,521 130,527 160,521 200,501 240,467 280,425 320,375 370,318 400,293 440,255 490,220 530,206 580,199 630,203 690,221 740,240 800,265 850,298 900,340 950,382 1000,415 1050,440 1110,463 1180,467 1240,462 1290,447 1340,422 1380,390 1430,350 1480,303 1510,280',
   '0,270 50,250 100,244 140,251 200,273 250,298 300,320 350,345 390,372 440,408 490,445 530,473 570,487 640,491 690,486 740,468 790,442 840,410 890,362 940,298 990,235 1040,180 1080,140 1120,112 1180,83 1240,68 1290,69 1350,82 1400,98 1460,117 1510,135',
   '0,138 60,160 120,183 180,198 240,213 300,223 345,236 380,253 430,298 480,352 530,412 580,482 620,549'],
  ['#ffff00', '',
   '8,235 45,290 103,371 150,422 190,455 235,480 265,487 308,487 350,472 400,438 450,397 510,346 560,298 610,260 660,232 720,219 770,217 825,225 880,242 930,267 980,298 1030,329 1090,367 1150,405 1200,430 1260,448 1310,454 1380,453 1430,440 1470,420 1510,395',
   '0,386 50,350 100,318 150,293 200,273 240,266 300,267 350,278 400,300 450,325 500,350 550,382 600,412 650,440 700,463 750,475 820,475 870,463 920,437 970,402 1030,350 1080,300 1140,240 1190,187 1240,145 1290,114 1350,90 1400,83 1450,83 1510,91',
   '0,94 60,110 120,130 180,149 240,167 300,185 350,199 400,213 450,235 500,262 550,292 600,330 625,359']
];
smoothSets.forEach(([c, dash, ...p]) => line(smooth(series(555, ...p)), c, dash));
line(path(bars(series(555,
  '8,208 27,272 36,255 46,293 66,335 75,315 84,342 95,338 103,277 125,279 131,273 141,276 160,257 170,253 180,237 190,262 200,243 218,258 226,250 236,269 245,247 255,240 264,210 283,211 302,198 320,217 330,213 345,197 360,192 378,167 388,134 398,133 407,109 426,117 436,126 445,199 464,208 480,222 493,199 502,235 512,250 530,212 540,188 550,125 559,176 569,180 578,172 588,178 597,193 607,165 616,118 624,97 635,98 645,92 656,93 664,83 675,104 692,135 701,125 711,124 730,107 740,77 759,101 778,132 787,162 830,178 854,234 863,226 873,243 885,212 894,209 904,215 911,248 920,252 930,265 942,213 968,150 982,152 996,185 1006,186 1015,164 1025,165 1034,145 1044,137 1053,115 1063,124 1072,218 1082,240 1091,264 1101,236 1110,233 1120,229 1129,388 1148,405 1167,391 1186,402 1196,416 1215,411 1224,408 1234,371 1243,432 1253,402 1262,402 1272,449 1281,440 1291,403 1302,447 1319,437 1336,368 1357,361 1369,345 1386,355 1395,275 1405,270 1414,276 1424,305 1434,340 1443,328 1452,325 1462,347 1471,318 1481,332 1490,310 1505,302 1519,315',
  '0,314 17,314 40,338 46,335 57,369 74,357 84,332 100,330 112,292 122,283 143,284 150,317 160,341 179,319 188,295 198,280 207,298 217,276 240,268 264,229 275,230 284,262 293,433 302,440 312,434 327,422 340,440 350,419 360,416 378,367 388,412 397,436 407,485 416,443 426,445 435,470 445,482 464,453 490,443 502,406 512,412 540,451 550,427 559,449 570,433 587,455 597,430 626,416 635,551 645,569 655,629 663,568 673,580 692,560 702,561 720,535 740,537 749,631 758,589 768,577 778,652 788,577 797,569 816,529 825,541 835,524 845,526 853,502 863,516 882,543 892,550 902,592 911,585 921,596 930,582 939,533 949,541 958,562 968,510 978,493 987,495 996,563 1006,482 1016,488 1025,485 1034,499 1063,499 1072,508 1082,430 1091,358 1101,402 1110,403 1120,505 1129,436 1139,436 1148,420 1160,416 1168,418 1177,444 1186,402 1196,380 1205,380 1215,361 1224,368 1234,385 1243,430 1253,367 1272,370 1300,352 1310,391 1330,365 1357,322 1367,335 1377,367 1386,360 1405,384 1414,354 1424,363 1433,335 1443,303 1452,327 1462,300 1471,250 1481,225 1492,209 1510,208 1519,235',
  '0,243 8,314 17,311 27,310 38,334 57,306 76,296 86,308 96,275 106,246 116,265 125,230 136,286 146,140 155,145 165,168 185,161 196,177 204,214 214,205 224,197 234,213 243,243 253,148 263,132 273,88 292,137 302,193 312,217 321,198 331,195 341,247 351,224 361,244 380,232 390,205 400,187 419,189 429,181 440,216 449,202 460,202 468,185 478,158 488,119 498,184 508,181 517,160 547,184 557,177 566,130 576,92 586,128 596,155 606,156 616,206 626,355 635,414 645,416 655,439 675,459 684,454 704,487 723,468 733,470 743,454 753,508 762,503 772,519 792,511 812,537 822,532 841,548 851,615 860,611 872,572 880,571 890,592 900,587 910,573 920,577 930,573 938,560'))), cyan);
line('M1515.500 585.500L1664 773', '#ff00ff');

/* CCI panel */
const cci = bars(series(555,
  '8,875 30,885 60,930 80,953 103,970 125,979 150,989 170,992 185,990 208,975 240,947 255,939 300,892 340,855 388,810 410,777 445,750 475,772 500,791 530,828 575,856 605,869 635,850 680,801 710,795 735,792 768,781 800,798 830,820 865,851 900,877 935,904 965,900 1000,878 1040,855 1072,818 1110,839 1130,850 1150,920 1175,985 1200,1065 1225,1130 1250,1175 1272,1208 1285,1213 1305,1210 1322,1218 1345,1202 1395,1163 1430,1100 1465,1066 1500,1040',
  '0,1032 20,1026 50,1046 85,1063 115,1056 150,1038 182,1055 215,1020 250,983 290,932 303,1000 325,1048 360,1105 388,1150 405,1205 420,1255 435,1299 460,1277 490,1258 520,1240 545,1240 580,1212 610,1193 635,1180 655,1215 690,1245 740,1263 780,1290 830,1251 880,1226 950,1208 1010,1192 1080,1160 1120,1130 1180,1124 1230,1112 1260,1127 1305,1116 1345,1127 1380,1114 1405,1120 1440,1135 1470,1108 1500,1025 1519,970',
  '0,975 12,957 25,956 45,939 85,919 115,926 135,938 146,957 160,905 185,860 205,817 243,770 258,763 293,716 320,765 345,797 380,822 415,827 440,853 460,865 475,863 500,836 535,813 555,806 570,804 595,781 615,779 630,795 645,855 670,930 700,1015 730,1120 760,1220 780,1275 800,1296 850,1288 862,1299 905,1300 938,1284'));
line(cci.map(p => `M${p[0] + .5} ${p[1]}V892`).join(''), '#404040');
hline(827, '#909090'); hline(892, teal); hline(954, '#909090');
line(path(series(555,
  '8,835 45,915 80,1010 110,1120 130,1210 150,1270 162,1290 175,1299 370,1299 395,1283 430,1235 470,1180 510,1145 550,1095 600,990 625,890 645,785 655,735 670,718 690,718 715,737 787,738 825,770 850,820 890,890 920,950 960,995 1000,1010 1035,1037 1070,1045 1095,1150 1115,1260 1135,1299 1400,1299 1440,1277 1465,1276 1490,1285',
  '0,1287 45,1288 75,1268 120,1205 160,1105 200,1020 235,880 260,755 283,718 300,745 340,920 370,1030 400,1165 420,1260 440,1300 850,1299 890,1280 930,1299 985,1299 1010,1277 1060,1230 1090,1185 1120,1110 1160,980 1200,815 1220,730 1240,716 1510,716',
  '0,716 622,716 640,760 660,890 690,1100 705,1200 720,1275 740,1299 905,1300')), '#cc6600', '3 3');
line(path(bars(series(555,
  '8,1005 20,930 40,835 60,800 75,795 90,810 103,800 113,778 120,800 140,797 150,815 165,843 180,880 190,935 210,990 225,1020 240,1065 255,1100 265,1130 277,1123 293,1155 310,1125 325,1090 345,1045 370,993 380,1025 415,1068 440,1120 460,1155 475,1180 483,1160 495,1175 512,1150 520,1170 530,1110 545,1000 560,900 580,820 595,740 607,715 625,740 640,820 655,870 668,930 675,920 690,1010 710,1120 725,1200 740,1240 755,1255 770,1250 785,1220 800,1185 815,1130 835,1065 850,1040 870,970 885,900 905,850 925,820 945,790 960,780 975,820 985,850 1000,855 1015,910 1035,1010 1050,1110 1070,1220 1085,1275 1110,1298 1130,1280 1150,1240 1165,1110 1180,1010 1200,920 1220,810 1235,765 1250,772 1268,763 1285,775 1303,800 1320,900 1335,920 1348,960 1358,950 1375,1020 1395,1055 1420,1100 1445,1090 1455,1110 1472,1120 1480,1160 1495,1165 1508,1180',
  '0,1150 15,1115 30,1080 50,1020 70,990 85,960 105,950 125,905 142,875 160,885 180,920 200,940 220,1000 232,1060 245,1105 260,1110 275,1138 305,1145 320,1125 335,1138 365,1125 378,1030 398,900 410,900 425,855 440,840 455,828 472,868 483,840 500,880 515,920 530,935 545,1010 560,1040 575,1130 590,1195 607,1220 620,1195 637,1215 650,1180 665,1130 690,1105 715,1085 725,980 740,828 750,838 765,803 783,805 797,763 807,820 817,845 827,840 840,890 855,940 865,935 880,1010 893,1090 905,1080 920,1090 935,1080 952,1085 965,1040 990,1005 1010,955 1025,935 1035,950 1045,918 1060,960 1080,1015 1100,1075 1115,1100 1130,1090 1155,1080 1167,1088 1177,1135 1190,1100 1205,1065 1225,1010 1250,975 1265,953 1280,965 1300,958 1328,970 1345,990 1360,1035 1385,1038 1400,990 1420,968 1450,972 1475,975 1492,968 1510,985',
  '0,1010 10,1038 20,1045 35,1080 50,1110 60,1115 68,1130 85,1080 105,990 120,955 140,930 165,912 185,908 205,930 225,938 235,1010 250,1110 268,1180 283,1205 300,1180 318,1165 332,1100 342,1108 355,1060 380,1025 395,930 415,850 440,838 465,845 490,925 510,930 525,970 540,1015 555,1110 575,1230 590,1240 607,1263 627,1258 645,1225 668,1210 690,1110 705,1050 720,920 735,850 750,812 768,812 785,845 805,895 825,930 840,970 850,998 860,1000'))), teal);
const slow = series(555,
  '8,1120 25,1030 45,930 65,860 85,815 110,798 140,797 160,810 180,840 200,895 225,965 250,1030 275,1105 300,1138 320,1140 345,1100 370,1035 385,1013 405,1030 445,1090 480,1145 500,1165 525,1165 545,1120 565,1010 580,900 600,790 615,740 630,727 645,770 665,850 690,930 715,1020 735,1130 755,1220 775,1250 790,1245 810,1205 840,1110 870,1030 890,940 915,870 940,830 972,790 990,810 1015,860 1040,960 1065,1090 1085,1200 1105,1270 1130,1293 1150,1280 1170,1210 1190,1090 1210,980 1235,850 1260,780 1280,766 1300,772 1325,830 1345,900 1370,950 1400,1025 1435,1090 1472,1115 1500,1150 1515,1167',
  '0,1170 25,1145 50,1085 75,1010 105,965 140,905 165,885 185,893 210,935 235,1000 260,1080 285,1125 315,1140 350,1134 378,1128 395,1050 410,960 435,880 462,838 500,855 525,900 550,950 575,1040 600,1150 620,1205 650,1210 675,1165 700,1115 728,1080 745,970 765,850 790,805 813,790 835,840 870,920 900,1010 925,1080 950,1087 975,1060 1005,1000 1040,945 1060,932 1085,980 1110,1050 1135,1093 1175,1090 1203,1118 1225,1065 1255,995 1285,965 1310,961 1345,975 1370,1015 1395,1038 1415,1010 1445,973 1485,978 1515,978',
  '0,985 25,1030 50,1075 80,1118 95,1105 115,1040 140,960 170,920 200,910 235,935 255,1000 280,1120 300,1188 315,1190 340,1150 370,1080 400,1010 420,910 445,850 470,842 495,875 530,950 560,1025 580,1120 605,1215 632,1260 660,1235 690,1195 715,1100 735,980 760,850 785,813 800,825 825,885 845,930 860,960');
line(smooth(slow), blue);
line(smooth(slow.map(p => [p[0] - 2, p[1]])), red, '4 4');
for (let i = 1; i < cci.length; i++) {
  const mid = (cci[i - 1][1] + cci[i][1]) / 2;
  line(path([cci[i - 1], cci[i]]), mid < 827 ? red : mid > 955 ? cyan : '#b4b4b4');
}
const blob = (x, y, c) => out.push(`<rect x="${x - 4}" y="${y - 4}" width="8" height="8" rx="3" fill="${c}"/>`);
[[299, 800], [763, 801], [1539, 802]].forEach(([x, y]) => blob(x, y, cyan));
[[167, 982], [599, 984], [639, 984], [659, 984], [663, 983], [1015, 982], [1063, 982]].forEach(([x, y]) => blob(x, y, red));

/* Legends */
[[3, 'GS:S&amp;P500 - 15 min', violet], [170, 'CME', violet], [215, '08/29/2022'], [306, 'L=4029.50', green], [393, 'Hi=4033.75'],
 [486, 'Lo=4015.75'], [582, 'C=4029.50', green], [672, 'Close'], [731, '4029.50', cyan], [799, 'HILOW Alert'], [909, '4147.79', red],
 [977, 'Strategy'], [1056, 'Leo Velo Chart'], [1210, '0.0000', teal]].forEach(([x, s, c]) => text(x, 106, s, c));
[[3, 'Macd ciclico 2'], [154, '0.00', '#800080'], [195, 'Leo Chart'], [284, '-8.71', cyan], [332, '8.00', red], [373, '-8.00', red],
 [420, '4.00', olive], [461, '-4.00', olive], [508, '0.00', blue]].forEach(([x, s, c]) => text(x, 574, s, c));
[[3, 'CCI Smothing ekam'], [167, '-174.92', cyan], [233, '120.00', gray], [291, '-120.00', gray], [356, '-174.92', '#404040'],
 [421, 'Leo Velo Chart'], [575, '0.00', teal], [616, 'Stoc colore'], [735, '-1.00', '#cc6600']].forEach(([x, s, c]) => text(x, 790, s, c));

/* Value axis */
rect(1830, 89, 1, 901, '#fff');
rect(1829, 558, 89, 1, '#fff');
rect(1829, 774, 89, 1, '#fff');
rect(3, 989, 1828, 1, '#fff');
[[165, '4,300.00'], [232, '4,250.00'], [299, '4,200.00'], [367, '4,150.00'], [434, '4,100.00'], [502, '4,050.00'], [891, '0.00'], [838, '100.00'], [944, '-100.00']]
  .forEach(([y, s]) => { rect(1831, y, 6, 1, '#fff'); text(1838, y + 7, s, '#fff', 'big'); });
[597, 636, 675, 714, 811, 864, 917, 970].forEach(y => rect(1831, y, 6, 1, '#fff'));
[[361, '4,147.79', red], [520, '4,029.50', violet], [568, '8.00', red], [607, '4.00', olive], [646, '0.00', blue], [685, '-4.00', olive],
 [724, '-8.00', red], [731, '-8.71', cyan], [818, '120.00', gray], [945, '-120.00', gray], [974, '-174.92', cyan]]
  .forEach(([y, s, c]) => { rect(1831, y, 87, 23, c); text(1839, y + 19, s, '#000', 'big'); });

/* Time axis */
for (let x = 23; x < 1800; x += 68) rect(x, 990, 1, 5, '#fff');
['8/12', '8/15', '8/16', '8/17', '8/18', '8/19', '8/22', '8/23', '8/24', '8/25', '8/26', '8/29', '8/30'].forEach((s, i) => {
  rect(43 + 144 * i, 990, 1, 10, '#fff');
  text(50 + 144 * i, 1014, s, '#fff', 'big');
});
[[705, '18:30'], [841, '18:00'], [977, '17:30'], [1113, '17:00']].forEach(([x, s]) => text(x, 1014, s, '#fff', 'big'));

svg.innerHTML = out.join('');
```
